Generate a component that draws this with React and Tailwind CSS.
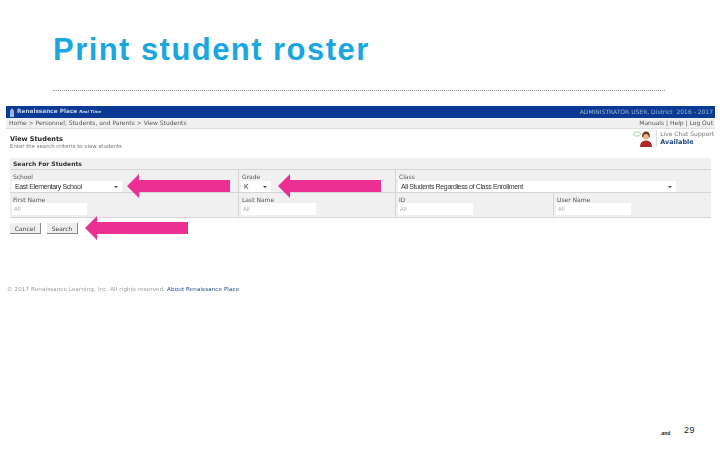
const V = { fontFamily: '"DejaVu Sans", sans-serif' };
const L = { fontFamily: '"Liberation Sans", sans-serif' };

function Arrow({ className }) {
  return (
    <svg className={"absolute " + className} width="103" height="24" viewBox="0 0 103 24">
      <polygon points="0,12 12,0 12,6 103,6 103,18 12,18 12,24" fill="#ec2f93" />
    </svg>
  );
}

function Select({ value, className }) {
  return (
    <div className={"h-[11px] bg-white flex items-center justify-between pl-[3px] pr-[4px] text-[7px] tracking-[-0.36px] leading-none text-[#333] " + className} style={L}>
      <span>{value}</span>
      <span className="w-0 h-0 border-l-[2px] border-r-[2px] border-t-[2px] border-l-transparent border-r-transparent border-t-[#444]" />
    </div>
  );
}

function Field({ label, children, className = "", tight = false }) {
  return (
    <div className={"pl-[2px] pt-[3px] flex flex-col " + (tight ? "gap-0 " : "gap-[1px] ") + className}>
      <div className="pl-[1px] text-[6px] leading-[7px] text-[#555]">{label}</div>
      {children}
    </div>
  );
}

function Input({ className = "" }) {
  return <div className={"h-[12px] bg-white text-[5.5px] leading-[12px] pl-[2px] text-[#aaa] " + className}>All</div>;
}

export default function App() {
  return (
    <div className="relative w-[720px] h-[450px] bg-white overflow-hidden">
      <div className="pl-[53px] pr-[55px] pt-[31px]">
        <h1 className="text-[31px] leading-[37px] font-bold tracking-[1.45px] text-[#1aa7e0]" style={L}>
          Print student roster
        </h1>
        <div className="mt-[22px] border-t border-dotted border-[#999]" />
      </div>

      <div className="ml-[6px] mt-[15px] w-[709px] blur-[0.35px]" style={V}>
        <div className="h-[12px] bg-[#0a3a94] flex items-center justify-between pl-[3px] pr-[2px]">
          <div className="flex items-center gap-[2px]">
            <svg width="6" height="9" viewBox="0 0 6 9"><path d="M3 0 L5 3 V9 H1 V3 Z" fill="#9fb4d6" /></svg>
            <span className="text-[5.8px] font-bold text-[#c5d3ea] leading-none">Renaissance Place</span>
            <span className="text-[4px] italic font-bold text-[#c5d3ea] leading-none">Real Time</span>
          </div>
          <span className="text-[6px] text-[#9fb4d6] leading-none">ADMINISTRATOR USER, District&nbsp;&nbsp;2016 - 2017</span>
        </div>
        <div className="h-[11px] bg-[#f0f0f0] border-b border-[#ddd] flex items-center justify-between pl-[3px] pr-[2px] text-[6px] text-[#555] leading-none">
          <span>Home &gt; Personnel, Students, and Parents &gt; View Students</span>
          <span>Manuals | Help | Log Out</span>
        </div>

        <div className="flex justify-between pl-[4px] pr-[1px] h-[29px]">
          <div className="pt-[6px]">
            <div className="text-[6.5px] leading-[8px] font-bold text-[#222]">View Students</div>
            <div className="text-[5.4px] leading-[7px] text-[#777]">Enter the search criteria to view students</div>
          </div>
          <div className="flex items-start pt-[1px] gap-[1px]">
            <svg width="22" height="18" viewBox="0 0 22 18">
              <ellipse cx="4" cy="4" rx="3.5" ry="2.2" fill="none" stroke="#8cc68c" strokeWidth="0.8" />
              <circle cx="13" cy="6" r="3.6" fill="#e8b58f" />
              <path d="M9 7 Q9 1.5 13 1.5 Q17 1.5 17 7 L16 7 Q15.5 4 13 4 Q10.5 4 10 7 Z" fill="#6b3a1e" />
              <path d="M7 17 Q7 10.5 13 10.5 Q19 10.5 19 17 Z" fill="#b3262a" />
            </svg>
            <div className="border-l border-[#ddd] pl-[3px] h-[16px]">
              <div className="text-[6px] leading-[8px] text-[#777]">Live Chat Support</div>
              <div className="text-[6.5px] leading-[9px] font-bold text-[#234a80]">Available</div>
            </div>
          </div>
        </div>

        <div className="ml-[4px] w-[701px] bg-[#f0f0f0] border-b border-[#d5d5d5]">
          <div className="h-[12px] border-b border-[#d5d5d5] pl-[3px] text-[6px] leading-[12px] font-bold text-[#333]">Search For Students</div>
          <div className="grid grid-cols-[228px_157px_158px_158px]">
            <Field label="School" className="h-[23px] border-b border-[#d5d5d5]">
              <Select value="East Elementary School" className="w-[110px]" />
            </Field>
            <Field label="Grade" className="h-[23px] border-b border-l border-[#d5d5d5]">
              <Select value="K" className="w-[30px]" />
            </Field>
            <Field label="Class" className="col-span-2 h-[23px] border-b border-l border-[#d5d5d5]">
              <Select value="All Students Regardless of Class Enrollment" className="w-[278px]" />
            </Field>
            <Field tight label="First Name" className="h-[24px]">
              <Input className="w-[75px]" />
            </Field>
            <Field tight label="Last Name" className="h-[24px] border-l border-[#d5d5d5]">
              <Input className="w-[75px]" />
            </Field>
            <Field tight label="ID" className="h-[24px] border-l border-[#d5d5d5]">
              <Input className="w-[75px]" />
            </Field>
            <Field tight label="User Name" className="h-[24px] border-l border-[#d5d5d5]">
              <Input className="w-[75px]" />
            </Field>
          </div>
        </div>

        <div className="ml-[4px] mt-[5px] flex gap-[6px]">
          <div className="w-[31px] h-[11px] bg-[#eee] border-r border-b border-[#888] text-[6px] leading-[11px] text-center text-[#444]">Cancel</div>
          <div className="w-[31px] h-[11px] bg-[#eee] border-r border-b border-[#888] text-[6px] leading-[11px] text-center text-[#444]">Search</div>
        </div>

        <div className="ml-[1px] mt-[52px] text-[5.5px] leading-[7px] text-[#999] tracking-[0.15px]">
          © 2017 Renaissance Learning, Inc. All rights reserved. <span className="text-[#234a80]">About Renaissance Place</span>
        </div>
      </div>

      <Arrow className="left-[127px] top-[174px]" />
      <Arrow className="left-[278px] top-[174px]" />
      <Arrow className="left-[85px] top-[216px]" />

      <span className="absolute left-[660px] top-[431px] text-[5px] leading-none text-[#222] font-bold" style={L}>.and</span>
      <span className="absolute left-[684px] top-[426px] text-[9px] leading-none text-[#222] tracking-[0.5px]" style={L}>29</span>
    </div>
  );
}
